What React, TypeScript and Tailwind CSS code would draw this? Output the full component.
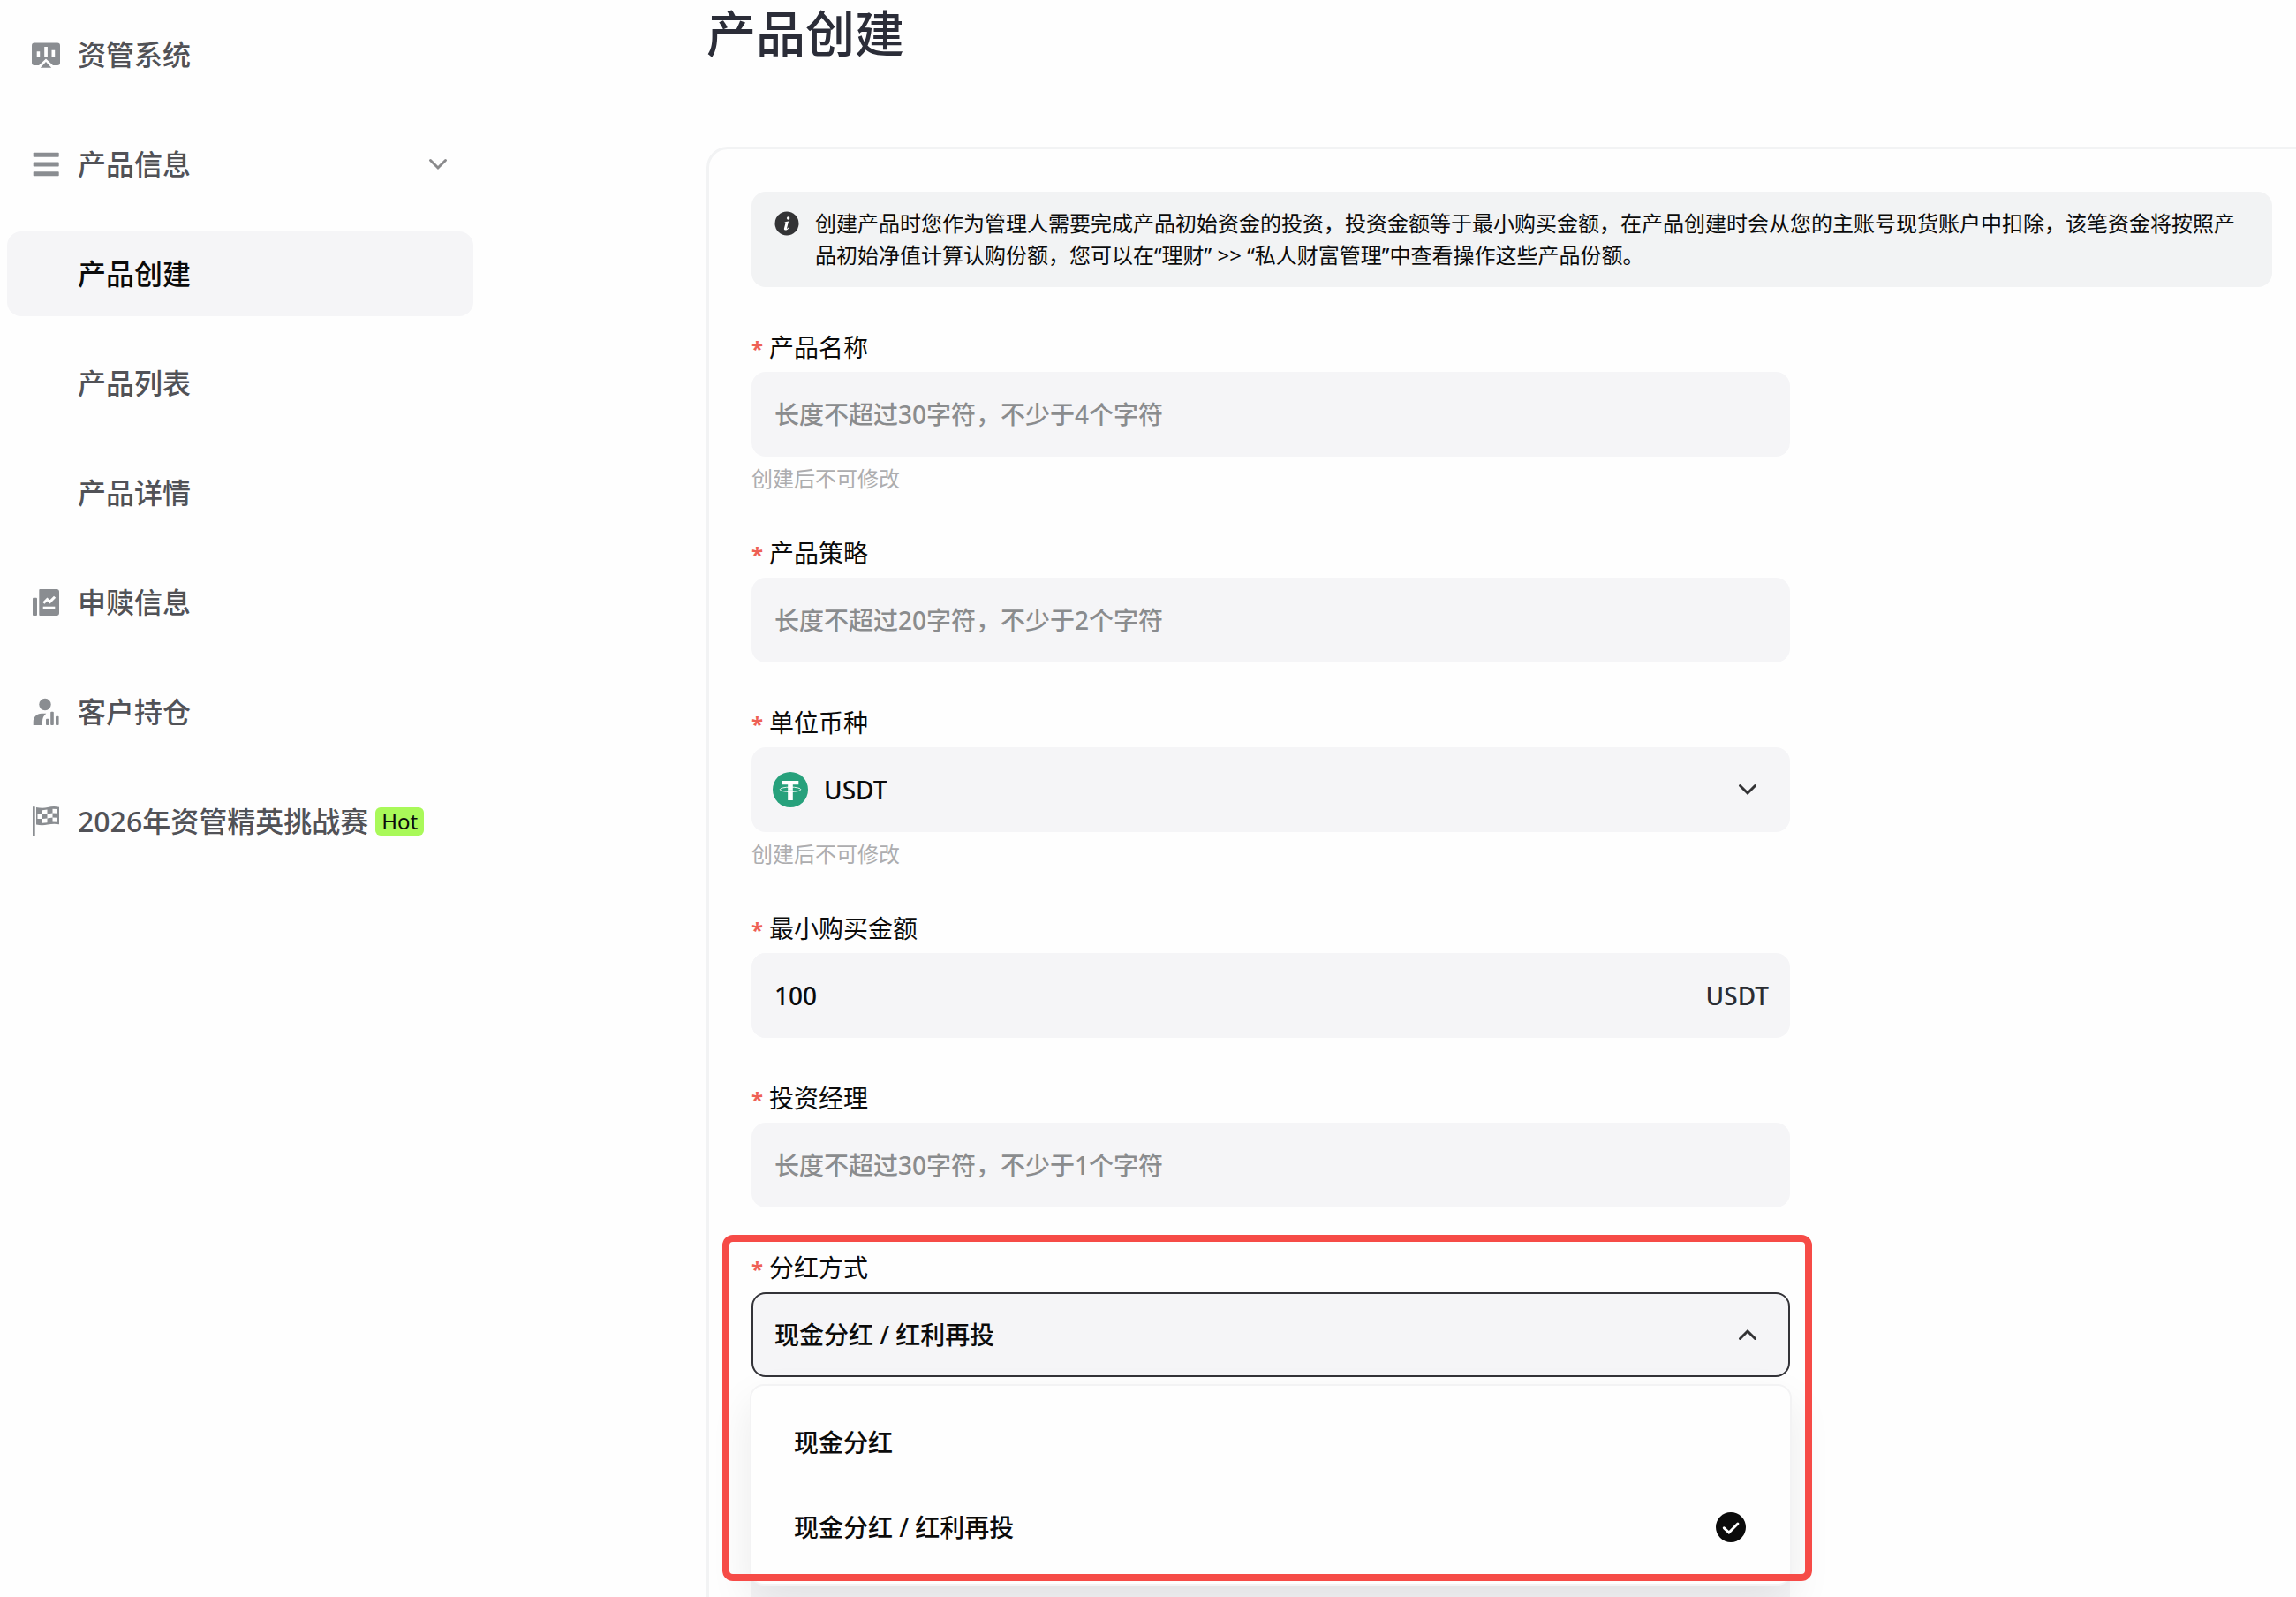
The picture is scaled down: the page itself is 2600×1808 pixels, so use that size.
import { ReactNode } from "react";

const controlClass =
  "h-24 w-full appearance-none rounded-2xl border-2 bg-[#f5f5f7] px-6 text-[28px] font-medium text-[#0b0b0b] outline-none placeholder:text-[#8a8c8e] placeholder:opacity-100";

function BoardIcon() {
  return (
    <svg viewBox="0 0 32 32" className="size-8 overflow-visible" fill="currentColor" aria-hidden="true">
      <rect y="2.5" width="32" height="25.5" rx="3" />
      <path fill="#fff" d="M5.7 12.3h3.5v6.4H5.7zM14.2 7h3.7v11.7h-3.7zM22.5 10.7h3.7v8h-3.7zM16 20.5l9 8.5H7z" />
      <path d="M16 24l6.2 6.7H9.8z" />
    </svg>
  );
}

function ListIcon() {
  return (
    <svg viewBox="0 0 32 32" className="size-8" fill="currentColor" aria-hidden="true">
      <rect x="1.7" y="2.7" width="29" height="5" rx="0.8" />
      <rect x="1.7" y="13.5" width="29" height="5" rx="0.8" />
      <rect x="1.7" y="24.2" width="29" height="5" rx="0.8" />
    </svg>
  );
}

function ReportIcon() {
  return (
    <svg viewBox="0 0 32 32" className="size-8" fill="currentColor" aria-hidden="true">
      <rect x="1" y="10.7" width="5" height="20.3" rx="1" />
      <path d="M9.3 1H28a3 3 0 0 1 3 3v24a3 3 0 0 1-3 3H9.3a1 1 0 0 1-1-1V2a1 1 0 0 1 1-1z" />
      <path fill="none" stroke="#fff" strokeWidth="3" d="M13.3 16.8l4.2-4.3 3 2.8 5.6-5.6" />
      <path fill="#fff" d="M12.7 20.7h13.6v3H12.7z" />
    </svg>
  );
}

function CustomerIcon() {
  return (
    <svg viewBox="0 0 32 32" className="size-8" fill="currentColor" aria-hidden="true">
      <circle cx="15" cy="7.5" r="6.7" />
      <path d="M1.7 30.9v-3.6c0-5.6 4-9.5 9.4-9.5h5.2c-3 2.4-4.3 5.4-4.3 9v4.1H2.5z" />
      <rect x="16" y="23.7" width="3.4" height="7.2" rx="1" />
      <rect x="21.2" y="15.7" width="3.6" height="15.2" rx="1" />
      <rect x="27" y="20.7" width="3.6" height="10.2" rx="1" />
    </svg>
  );
}

function FlagIcon() {
  return (
    <svg viewBox="0 0 32 32" className="size-8 overflow-visible" fill="currentColor" aria-hidden="true">
      <rect x="1" y="-1" width="2.7" height="33.7" rx="0.8" />
      <path d="M5 0c5 1 9 1 13 0s8-1.5 13-.2v19.5c-5-1-9-.5-13 .3s-8 1-13 0z" />
      <path
        fill="#fff"
        d="M12 3.2l5.5-.6v4.8l-5.5.6zM23.5 1.8l5.5.2v4.8l-5.5-.2zM6.500 8H12v5H6.500zM17.5 7.4l6-.8v5l-6 .8zM12 13l5.5-.6v4.8l-5.5.6zM23.5 11.600l5.5.2v5l-5.5-.2z"
      />
    </svg>
  );
}

function Chevron({ up = false }: { up?: boolean }) {
  return (
    <svg viewBox="0 0 24 24" className="size-6" fill="none" stroke="currentColor" strokeWidth="3" strokeLinecap="round" aria-hidden="true">
      <path d={up ? "M3.5 16.5L12 8l8.5 8.5" : "M3.5 7.5L12 16l8.5-8.5"} />
    </svg>
  );
}

function InfoIcon() {
  return (
    <svg viewBox="0 0 32 32" className="size-8" aria-hidden="true">
      <circle cx="16" cy="16" r="13.5" fill="#333335" />
      <circle cx="17.6" cy="10" r="1.7" fill="#fff" />
      <path
        fill="#fff"
        d="M13.3 14.2l4.8-.7-2 7.7c-.2.9.3.9 1.8-.7l.5.4c-1.3 1.9-2.6 2.7-3.9 2.7-1.4 0-1.9-.9-1.5-2.4l1.5-5.6c.2-.8 0-.9-1.3-1z"
      />
    </svg>
  );
}

function TetherIcon() {
  return (
    <svg viewBox="0 0 40 40" className="size-10" aria-hidden="true">
      <circle cx="20" cy="20" r="20" fill="#27a17c" />
      <path fill="#fff" d="M10.7 10h18.6v4.3h-6.500V32h-5.600V14.3h-6.500z" />
      <ellipse cx="20" cy="19.8" rx="11.8" ry="2.7" fill="none" stroke="#fff" strokeWidth="0.9" />
      <path stroke="#27a17c" strokeWidth="0.8" d="M17.2 21.3h5.6" />
    </svg>
  );
}

function CheckIcon() {
  return (
    <svg viewBox="0 0 34 34" className="size-[34px]" aria-hidden="true">
      <circle cx="17" cy="17" r="17" fill="#0b0b0b" />
      <path fill="none" stroke="#fff" strokeWidth="3" strokeLinecap="round" d="M9.3 17.8l5.6 5.2 10-10" />
    </svg>
  );
}

interface NavItemProps {
  label: string;
  icon?: ReactNode;
  active?: boolean;
  children?: ReactNode;
}

function NavItem({ label, icon, active, children }: NavItemProps) {
  return (
    <a
      href="#"
      aria-current={active ? "page" : undefined}
      className={`flex h-24 items-center gap-2 rounded-2xl px-7 text-[32px] font-medium ${
        active ? "bg-[#f5f5f7] text-[#0b0b0b]" : "text-[#515257]"
      }`}
    >
      <span className="mr-3 size-8 text-[#8a8d91]">{icon}</span>
      <span>{label}</span>
      {children}
    </a>
  );
}

interface FieldProps {
  id: string;
  label: string;
  hint?: string;
  children: ReactNode;
}

function Field({ id, label, hint, children }: FieldProps) {
  return (
    <div className="mt-12">
      <label htmlFor={id} className="flex h-10 items-center gap-2 text-[28px] text-[#0b0b0b]">
        <span className="w-3 pt-1 text-2xl font-bold text-[#ee6055]">*</span>
        {label}
      </label>
      <div className="mt-2">{children}</div>
      {hint && <p className="mt-2 text-2xl leading-[33px] text-[#adadaf]">{hint}</p>}
    </div>
  );
}

export default function App() {
  return (
    <div className="flex h-screen overflow-hidden bg-[#fefefe] font-['Noto_Sans','Noto_Sans_CJK_SC',sans-serif]">
      <aside className="w-[800px] shrink-0 pt-[14px] pl-2">
        <nav className="flex w-[528px] flex-col gap-7">
          <NavItem label="资管系统" icon={<BoardIcon />} />
          <NavItem label="产品信息" icon={<ListIcon />}>
            <span className="ml-auto text-[#8a8a8c]">
              <Chevron />
            </span>
          </NavItem>
          <NavItem label="产品创建" active />
          <NavItem label="产品列表" />
          <NavItem label="产品详情" />
          <NavItem label="申赎信息" icon={<ReportIcon />} />
          <NavItem label="客户持仓" icon={<CustomerIcon />} />
          <NavItem label="2026年资管精英挑战赛" icon={<FlagIcon />}>
            <span className="h-8 rounded-md bg-[#a9f959] px-[7px] text-2xl leading-8 font-normal text-[#0b0b0b]">Hot</span>
          </NavItem>
        </nav>
      </aside>

      <main className="-mr-6 min-w-0 flex-1">
        <h1 className="text-[56px] leading-[74px] font-medium text-[#2b2d38]">产品创建</h1>

        <form className="mt-[92px] rounded-3xl border-3 border-[#f2f3f4] p-12">
          <div className="flex gap-4 rounded-2xl bg-[#f2f3f4] px-6 py-[18px]">
            <span className="pt-[2px]">
              <InfoIcon />
            </span>
            <p className="flex-1 text-2xl leading-9 text-[#0b0b0b]">
              创建产品时您作为管理人需要完成产品初始资金的投资，投资金额等于最小购买金额，在产品创建时会从您的主账号现货账户中扣除，该笔资金将按照产品初始净值计算认购份额，您可以在“理财” &gt;&gt; “私人财富管理”中查看操作这些产品份额。
            </p>
          </div>

          <div className="max-w-[1176px]">
            <Field id="name" label="产品名称" hint="创建后不可修改">
              <input id="name" className={`${controlClass} border-transparent`} placeholder="长度不超过30字符，不少于4个字符" />
            </Field>

            <Field id="strategy" label="产品策略">
              <input id="strategy" className={`${controlClass} border-transparent`} placeholder="长度不超过20字符，不少于2个字符" />
            </Field>

            <Field id="currency" label="单位币种" hint="创建后不可修改">
              <div className="grid grid-cols-1 items-center">
                <select id="currency" className={`${controlClass} col-start-1 row-start-1 border-transparent indent-14`}>
                  <option>USDT</option>
                </select>
                <div className="pointer-events-none col-start-1 row-start-1 flex items-center justify-between pr-9 pl-6 text-[#333335]">
                  <TetherIcon />
                  <Chevron />
                </div>
              </div>
            </Field>

            <Field id="minimum" label="最小购买金额">
              <div className="flex items-center rounded-2xl bg-[#f5f5f7] pr-6">
                <input id="minimum" className={`${controlClass} border-transparent`} defaultValue="100" />
                <span className="text-[28px] font-medium text-[#2b2d33]">USDT</span>
              </div>
            </Field>

            <Field id="manager" label="投资经理">
              <input id="manager" className={`${controlClass} border-transparent`} placeholder="长度不超过30字符，不少于1个字符" />
            </Field>

            <div className="relative">
              <Field id="dividend" label="分红方式">
                <div className="grid grid-cols-1 items-center">
                  <select
                    id="dividend"
                    defaultValue="现金分红 / 红利再投"
                    className={`${controlClass} col-start-1 row-start-1 border-[#333338]`}
                  >
                    <option>现金分红</option>
                    <option>现金分红 / 红利再投</option>
                  </select>
                  <div className="pointer-events-none col-start-1 row-start-1 flex justify-end pr-9 text-[#333335]">
                    <Chevron up />
                  </div>
                </div>
              </Field>

              <ul
                role="listbox"
                aria-label="分红方式"
                className="absolute -inset-x-[2px] top-full z-10 mt-2 rounded-2xl border-2 border-[#f3f3f4] bg-[#fefefe] py-4 text-[28px] font-medium text-[#0b0b0b] shadow-[0_20px_48px_rgba(0,0,0,0.08)]"
              >
                <li role="option" aria-selected="false" className="flex h-24 items-center px-12">
                  现金分红
                </li>
                <li role="option" aria-selected="true" className="flex h-24 items-center justify-between pr-[50px] pl-12">
                  现金分红 / 红利再投
                  <CheckIcon />
                </li>
              </ul>

              {/* highlight frame around the dividend selector */}
              <div className="pointer-events-none absolute -top-[17px] -right-[25px] -left-[33px] z-20 h-[392px] rounded-xl border-8 border-[#f64b47]" />
            </div>

            <textarea aria-label="产品介绍" className="mt-24 block h-60 w-full resize-none rounded-2xl bg-[#f5f5f7]" />
          </div>
        </form>
      </main>
    </div>
  );
}
